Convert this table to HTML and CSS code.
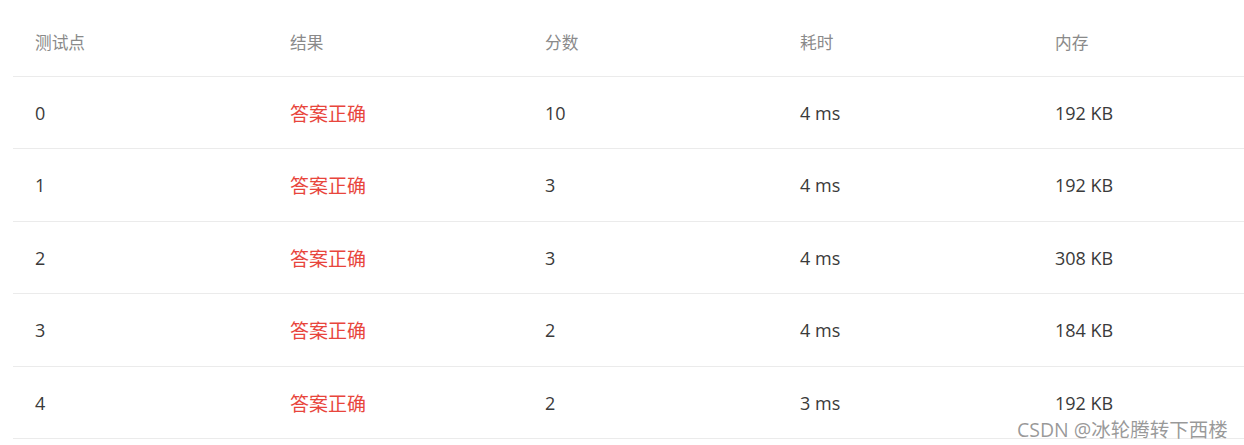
FILE: index.html
```html
<!DOCTYPE html>
<html lang="zh">
<head>
<meta charset="utf-8">
<link rel="stylesheet" href="styles.css">
</head>
<body>
<div class="wrap">
  <table class="result">
    <thead>
      <tr><th>测试点</th><th>结果</th><th>分数</th><th>耗时</th><th>内存</th></tr>
    </thead>
    <tbody>
      <tr><td>0</td><td class="ok">答案正确</td><td>10</td><td>4 ms</td><td>192 KB</td></tr>
      <tr><td>1</td><td class="ok">答案正确</td><td>3</td><td>4 ms</td><td>192 KB</td></tr>
      <tr><td>2</td><td class="ok">答案正确</td><td>3</td><td>4 ms</td><td>308 KB</td></tr>
      <tr><td>3</td><td class="ok">答案正确</td><td>2</td><td>4 ms</td><td>184 KB</td></tr>
      <tr><td>4</td><td class="ok">答案正确</td><td>2</td><td>3 ms</td><td>192 KB</td></tr>
    </tbody>
  </table>
  <div class="watermark">CSDN @冰轮腾转下西楼</div>
</div>
</body>
</html>
```
FILE: styles.css
```css
html, body {
  margin: 0;
  padding: 0;
  background: #fff;
  overflow: hidden;
}
body {
  font-family: "Open Sans", "Noto Sans CJK SC", sans-serif;
  width: 1244px;
  height: 445px;
}
.wrap {
  position: relative;
  padding-left: 13px;
  height: 445px;
}
.result {
  border-collapse: collapse;
  width: 1275px;
  table-layout: fixed;
}
.result th, .result td {
  text-align: left;
  padding: 0 0 0 22px;
  border-bottom: 1px solid #ebebeb;
  box-sizing: border-box;
}
.result th {
  height: 76px;
  padding-top: 9px;
  font-weight: normal;
  font-size: 16.7px;
  color: #8a8a8a;
}
.result td {
  height: 72.5px;
  padding-top: 1px;
  font-size: 18px;
  color: #3a3a3a;
}
.result td.ok {
  color: #e8453c;
  font-size: 19px;
}
.watermark {
  position: absolute;
  left: 1017px;
  top: 414px;
  font-size: 19.5px;
  color: rgba(120, 120, 120, 0.75);
  white-space: nowrap;
}
```
